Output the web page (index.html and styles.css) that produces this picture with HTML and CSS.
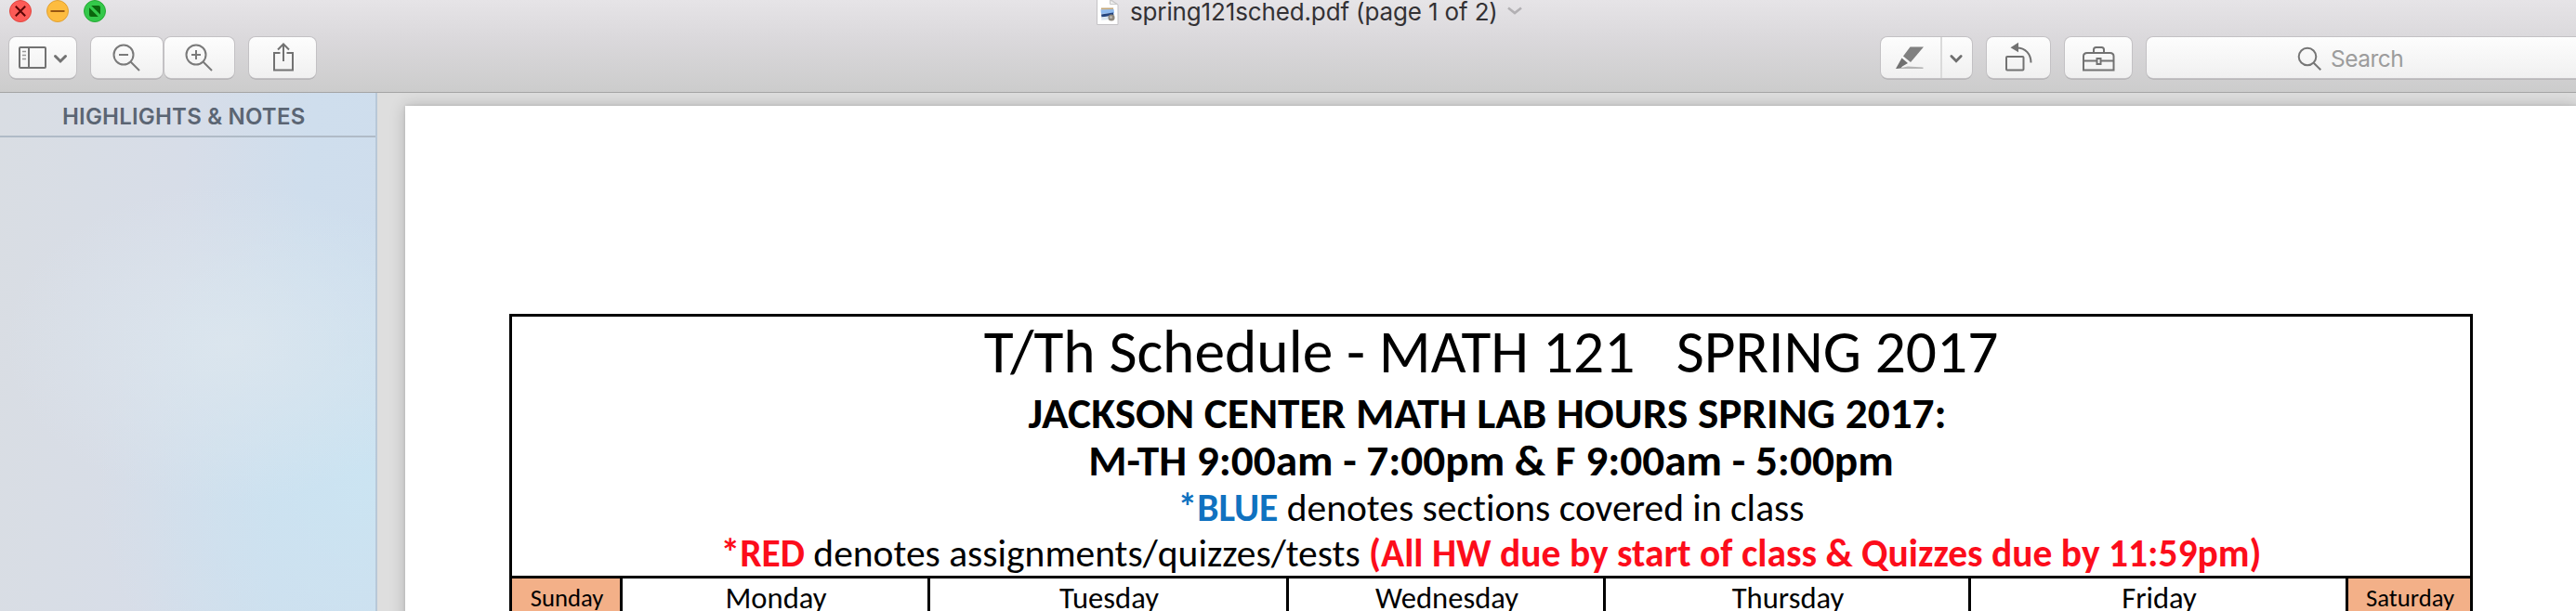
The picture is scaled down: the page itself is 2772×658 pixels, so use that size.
FILE: index.html
```html
<!DOCTYPE html>
<html lang="en">
<head>
<meta charset="utf-8">
<title>spring121sched.pdf</title>
<link rel="stylesheet" href="styles.css">
</head>
<body>
<div class="window">
  <header class="chrome">
    <div class="titlebar">
      <div class="lights">
        <svg class="light" viewBox="0 0 24 24"><circle cx="12" cy="12" r="11.5" fill="#fc5b57" stroke="#e2463f"/><path d="M6.8 6.8l10.4 10.4M17.2 6.8L6.8 17.2" stroke="#5c0505" stroke-width="2"/></svg>
        <svg class="light" viewBox="0 0 24 24"><circle cx="12" cy="12" r="11.5" fill="#fdbc40" stroke="#e0a033"/><path d="M4.5 12h15" stroke="#985712" stroke-width="2"/></svg>
        <svg class="light" viewBox="0 0 24 24"><circle cx="12" cy="12" r="11.5" fill="#34c84a" stroke="#27a934"/><path d="M6 8.2L15.8 18H8q-2 0-2-2zM8.2 6H16q2 0 2 2v7.8z" fill="#0b650d"/></svg>
      </div>
      <div class="doc-title">
        <svg class="file-icon" width="24" height="27" viewBox="0 0 24 27"><path d="M.5-1h14l8.500 6v21.500H.5z" fill="#fff" stroke="#c4c2c5"/><path d="M14.500 0v4.500H22z" fill="#eee" stroke="#c8c8c8"/><path d="M4.500 9l14-1 1.500 13-15 1z" fill="#f2f2f2"/><path d="M5 8.500h13v2H5z" fill="#c6a878"/><path d="M4.500 10.500l14-.5.5 4-14 1z" fill="#8db9ef"/><path d="M5 15.500l13-2 .5 3-13 2z" fill="#24447e"/><path d="M5.500 18.500l12-1v3l-12 1z" fill="#d9e5f0"/><circle cx="16" cy="19" r="3.500" fill="#8d867b"/><circle cx="15.500" cy="18.500" r="1.500" fill="#bcb8b0"/></svg>
        <span class="doc-name">spring121sched.pdf (page 1 of 2)</span>
        <svg class="title-chevron" width="18" height="12" viewBox="0 0 18 12"><path d="M2 2.500l7 5.500 7-5.500" fill="none" stroke="#b2b0b3" stroke-width="2.600"/></svg>
      </div>
    </div>
    <div class="toolbar">
      <div class="tools tools-left">
        <div class="btn btn-view">
          <svg width="72" height="44" viewBox="0 0 72 44" fill="none" stroke="#727272"><rect x="11" y="11" width="28" height="22" rx="1" stroke-width="2"/><path d="M21 11v22" stroke-width="2"/><path d="M14 15.500h4M14 19.500h4M14 23.500h4" stroke="#999" stroke-width="1.600"/><path d="M49.500 20.500l5.500 5.500 5.500-5.500" stroke-width="3" stroke-linecap="round"/></svg>
        </div>
        <div class="zoom-group">
          <div class="btn btn-out"><svg width="77" height="44" viewBox="0 0 77 44" fill="none" stroke="#7a7a7a" stroke-width="2"><circle cx="35" cy="19" r="10.500"/><path d="M30 19h10M42.500 26.500l9.500 9.500"/></svg></div>
          <div class="btn btn-in"><svg width="75" height="44" viewBox="0 0 75 44" fill="none" stroke="#7a7a7a" stroke-width="2"><circle cx="34" cy="19" r="10.500"/><path d="M29 19h10M34 14v10M41.500 26.500l9.500 9.500"/></svg></div>
        </div>
        <div class="btn btn-share"><svg width="72" height="44" viewBox="0 0 72 44" fill="none" stroke="#727272" stroke-width="2"><path d="M33.500 17H27v18.500h20V17h-6.500M37 26V8M31 13.500L37 7.500l6 6"/></svg></div>
      </div>
      <div class="tools tools-right">
        <div class="btn btn-mark">
          <svg width="64" height="44" viewBox="0 0 64 44"><path d="M31.500 10.500H46L32 27l-8-6.500z" fill="#808080"/><path d="M22.500 22.500l6.500 5.500-6 3.500-2 2.500h-5z" fill="#707070"/><path d="M17 34l12-2.500 16.500 1v1.500z" fill="#b5b5b5"/></svg>
          <svg class="split" width="33" height="44" viewBox="0 0 33 44"><path d="M10.500 20.500l5.500 5.500 5.500-5.500" fill="none" stroke="#6e6e6e" stroke-width="3" stroke-linecap="round"/></svg>
        </div>
        <div class="btn btn-rotate"><svg width="69" height="44" viewBox="0 0 69 44" fill="none" stroke="#727272" stroke-width="2"><rect x="21" y="21" width="18.500" height="14.500" rx="1"/><path d="M32 11.500c10 0 15.500 7 15.500 16"/><path d="M25.500 11.300l8.500-5.500v10.500z" fill="#727272" stroke="none"/></svg></div>
        <div class="btn btn-box"><svg width="72" height="44" viewBox="0 0 72 44" fill="none" stroke="#727272" stroke-width="2"><path d="M20 35.500v-15q0-3.500 4-3.500h24.500q4 0 4 3.500v15zM20 25.500h14M39 25.500h13.500M31 17v-3.500q0-2.500 2.500-2.500h6q2.500 0 2.500 2.500V17"/><path d="M34.500 23h4v6h-4z"/></svg></div>
        <div class="search">
          <svg width="28" height="28" viewBox="0 0 28 28" fill="none" stroke="#757575" stroke-width="2"><circle cx="11" cy="11" r="9.300"/><path d="M17.700 17.700l7.600 7.600"/></svg>
          <span class="search-text">Search</span>
        </div>
      </div>
    </div>
  </header>
  <main class="body">
    <aside class="sidebar">
      <h2 class="sidebar-title">HIGHLIGHTS &amp; NOTES</h2>
    </aside>
    <section class="viewer">
      <article class="page">
        <div class="schedule">
          <div class="heading">
            <div class="line title">T/Th Schedule - MATH 121 &nbsp; SPRING 2017</div>
            <div class="line hours hours-first">JACKSON CENTER MATH LAB HOURS SPRING 2017:</div>
            <div class="line hours">M-TH 9:00am - 7:00pm &amp; F 9:00am - 5:00pm</div>
            <div class="line note"><b class="blue">*BLUE</b> denotes sections covered in class</div>
            <div class="line note"><b class="red">*RED</b> denotes assignments/quizzes/tests <b class="red">(All HW due by start of class &amp; Quizzes due by 11:59pm)</b></div>
          </div>
          <div class="days">
            <div class="day weekend">Sunday</div>
            <div class="day">Monday</div>
            <div class="day">Tuesday</div>
            <div class="day">Wednesday</div>
            <div class="day">Thursday</div>
            <div class="day">Friday</div>
            <div class="day weekend">Saturday</div>
          </div>
        </div>
      </article>
    </section>
  </main>
</div>
</body>
</html>
```
FILE: styles.css
```css
* { box-sizing: border-box; }
body { margin: 0; overflow: hidden; }
svg { display: block; flex: none; }

.window {
  display: flex;
  flex-direction: column;
  width: 2772px;
  height: 658px;
  overflow: hidden;
  font-family: Inter, "Liberation Sans", sans-serif;
}

.chrome {
  flex: none;
  height: 100px;
  background: linear-gradient(#e6e4e7, #dbd9dc 40%, #cccccc);
  border-bottom: 1px solid #a4a4a4;
}
.titlebar {
  display: grid;
  grid-template-columns: 1180px 1fr;
  height: 40px;
  align-items: start;
}
.lights { display: flex; gap: 16px; padding-left: 10px; }
.light { width: 24px; height: 24px; }
.doc-title { display: flex; align-items: flex-start; }
.file-icon { margin-right: 12px; }
.doc-name {
  font-size: 26px;
  font-weight: 400;
  letter-spacing: -0.14px;
  line-height: 26px;
  color: #333134;
}
.title-chevron { margin: 6px 0 0 9px; }

.toolbar { display: flex; justify-content: space-between; padding-left: 10px; }
.tools { display: flex; }
.btn, .search {
  display: flex;
  height: 44px;
  border-radius: 7px;
  background: linear-gradient(#fdfdfd, #f0f0f0);
  box-shadow: 0 0 0 1px #c3c1c4, 0 1.5px 0 0 #a3a2a4;
}
.btn { overflow: hidden; }
.btn-view { width: 72px; margin-right: 16px; }
.zoom-group { display: flex; gap: 2px; margin-right: 16px; }
.btn-out { width: 77px; }
.btn-in { width: 75px; }
.btn-share { width: 72px; }
.btn-mark { width: 98px; margin-right: 16px; }
.split { border-left: 2px solid #dadada; }
.btn-rotate { width: 68px; margin-right: 16px; }
.btn-box { width: 72px; margin-right: 16px; }
.search {
  width: 462px;
  border-radius: 7px 0 0 7px;
  padding: 10px 0 0 162px;
}
.search-text {
  margin-left: 8px;
  font-size: 24.5px;
  line-height: 26px;
  letter-spacing: -0.5px;
  color: #9c9c9c;
}

.body { display: flex; flex: 1; min-height: 0; }
.sidebar {
  flex: none;
  width: 406px;
  border-right: 2px solid #b8c8d8;
  background:
    radial-gradient(ellipse 240px 170px at 245px 270px, rgba(220, 230, 238, 0.9), rgba(220, 230, 238, 0)),
    radial-gradient(ellipse 300px 300px at 404px 420px, #cbe4f2, rgba(203, 228, 242, 0)),
    linear-gradient(95deg, #d9dde3 0%, #d7dde8 45%, #cfdeed 75%, #cedded 100%);
}
.sidebar-title {
  margin: 0;
  height: 48px;
  padding-left: 67px;
  border-bottom: 2px solid #b0bbc7;
  font-size: 24px;
  font-weight: 600;
  line-height: 51px;
  letter-spacing: 0.2px;
  color: #5b6573;
}

.viewer {
  flex: 1;
  padding: 14px 0 0 30px;
  background: #dedede;
  overflow: hidden;
}
.page {
  width: 2338px;
  height: 700px;
  padding: 224px 0 0 112px;
  background: #fff;
  box-shadow: 0 0 3px rgba(0, 0, 0, 0.12), 0 0 16px rgba(0, 0, 0, 0.2);
}
.schedule {
  width: 2113px;
  border: 3px solid #000;
  color: #000;
  font-family: Carlito, Calibri, Lato, sans-serif;
  font-variant-ligatures: none;
}
.heading {
  height: 282px;
  padding-top: 13px;
  border-bottom: 3px solid #000;
  text-align: center;
}
.line { white-space: nowrap; line-height: 50px; }
.title { font-size: 65.4px; }
.hours { font-size: 47.3px; font-weight: 700; }
.hours-first { margin: 16px 0 1px; padding-right: 8px; }
.note { font-size: 41.5px; line-height: 49px; }
.hours + .note { margin-top: 1px; }
.blue { color: #1072c0; }
.red { color: #fc0d1b; }

.days {
  display: grid;
  grid-template-columns: 119px 331px 386px 341px 393px 406px 131px;
  height: 60px;
}
.day {
  border-right: 3px solid #000;
  padding-left: 2px;
  text-align: center;
  font-size: 32.6px;
  line-height: 42px;
}
.day:last-child { border-right: 0; }
.weekend { background: #f3b088; font-size: 26.7px; }
```
